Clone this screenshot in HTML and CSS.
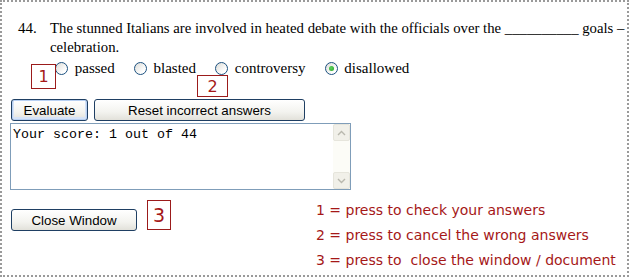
FILE: index.html
```html
<!DOCTYPE html>
<html lang="en">
<head>
  <meta charset="UTF-8">
  <title>Exercise 44</title>
  <link rel="stylesheet" href="styles.css">
</head>
<body>
  <div class="page">
    <div class="question">
      <span class="num">44.</span>
      <div class="stem">The stunned Italians are involved in heated debate with the officials over the __________ goals &ndash;<br>celebration.</div>
    </div>
    <div class="options">
      <label><input type="radio" name="q44"> passed</label>
      <label><input type="radio" name="q44"> blasted</label>
      <label><input type="radio" name="q44"> controversy</label>
      <label><input type="radio" name="q44" checked> disallowed</label>
      <span class="marker m1">1</span>
      <span class="marker m2">2</span>
    </div>
    <div class="actions">
      <button class="btn focused" style="width: 77px">Evaluate</button>
      <button class="btn" style="width: 211px">Reset incorrect answers</button>
    </div>
    <div class="scorebox">
      <textarea readonly>Your score: 1 out of 44</textarea>
      <div class="scroll">
        <span class="arrow"><svg width="9" height="6" viewBox="0 0 9 6"><path d="M1 5 L4.5 1.5 L8 5" fill="none" stroke="#b9b8ae" stroke-width="1.4"/></svg></span>
        <span class="arrow"><svg width="9" height="6" viewBox="0 0 9 6"><path d="M1 1 L4.5 4.5 L8 1" fill="none" stroke="#b9b8ae" stroke-width="1.4"/></svg></span>
      </div>
    </div>
    <div class="footer">
      <button class="btn close" style="width: 126px">Close Window</button>
      <span class="marker m3">3</span>
      <div class="legend">
        <div>1 = press to check your answers</div>
        <div>2 = press to cancel the wrong answers</div>
        <div>3 = press to &nbsp;close the window / document</div>
      </div>
    </div>
  </div>
</body>
</html>
```

FILE: styles.css
```css
html, body {
  margin: 0;
  padding: 0;
  background: #fff;
}
.page {
  width: 625px;
  height: 273px;
  border: 2px dotted #9a9a9a;
  overflow: hidden;
  font-family: "Liberation Serif", serif;
  font-size: 15px;
  color: #000;
}
.question {
  display: flex;
  padding: 17px 0 0 16px;
  line-height: 19px;
}
.num {
  width: 32px;
  flex: none;
}
.stem {
  white-space: nowrap;
  font-size: 14.75px;
}
.options {
  position: relative;
  display: flex;
  gap: 19px;
  margin: 2px 0 0 53px;
  height: 19px;
  line-height: 19px;
}
.options label {
  display: flex;
  align-items: center;
  white-space: pre;
}
.options input {
  appearance: none;
  width: 13px;
  height: 13px;
  margin: 0 3px 0 0;
  border: 1px solid #1c5180;
  border-radius: 50%;
  background: linear-gradient(135deg, #dcdcd7, #fff 75%);
  box-sizing: border-box;
  display: grid;
  place-items: center;
}
.options input:checked::after {
  content: "";
  width: 5px;
  height: 5px;
  border-radius: 50%;
  background: radial-gradient(circle at 40% 40%, #5fd35f, #21a121);
}
.marker {
  display: inline-flex;
  align-items: center;
  justify-content: center;
  border: 1px solid #9b1b1b;
  color: #a51818;
  font-family: "DejaVu Sans", sans-serif;
  box-sizing: border-box;
  background: #fff;
}
.m1, .m2 {
  position: absolute;
  font-size: 16px;
}
.m1 {
  left: -24px;
  top: 5px;
  width: 25px;
  height: 25px;
}
.m2 {
  left: 142px;
  top: 16px;
  width: 31px;
  height: 22px;
}
.actions {
  display: flex;
  gap: 6px;
  margin: 21px 0 0 9px;
}
.btn {
  height: 22px;
  padding: 0;
  border: 1px solid #1f3f63;
  border-radius: 3px;
  background: linear-gradient(#ffffff, #f3f3ef 60%, #e2e1da);
  font-family: "Liberation Sans", sans-serif;
  font-size: 13.33px;
  color: #000;
}
.btn.focused {
  box-shadow: inset 0 0 0 1px #b8d0f2, inset 0 -1px 0 2px #d6e3f7;
}
.scorebox {
  display: flex;
  width: 341px;
  height: 67px;
  margin: 2px 0 0 8px;
  border: 1px solid #7f9db9;
  box-sizing: border-box;
}
.scorebox textarea {
  flex: 1;
  border: none;
  resize: none;
  outline: none;
  padding: 3px 2px;
  margin: 0;
  font-family: "Liberation Mono", monospace;
  font-size: 13.33px;
  line-height: 15px;
  color: #000;
  overflow: hidden;
}
.scroll {
  width: 17px;
  display: flex;
  flex-direction: column;
  justify-content: space-between;
  background: #fcfcf7;
}
.arrow {
  height: 17px;
  display: grid;
  place-items: center;
  background: #f1f0e9;
  border: 1px solid #e6e5dc;
  border-radius: 2px;
  box-sizing: border-box;
}
.footer {
  display: flex;
  align-items: flex-start;
  margin: 10px 0 0 9px;
}
.btn.close {
  margin-top: 9px;
  height: 22px;
}
.m3 {
  margin: 0 0 0 10px;
  width: 24px;
  height: 30px;
  font-size: 19px;
}
.legend {
  margin: -2px 0 0 145px;
  color: #a51818;
  font-family: "DejaVu Sans", sans-serif;
  font-size: 14px;
  line-height: 25px;
}
```
